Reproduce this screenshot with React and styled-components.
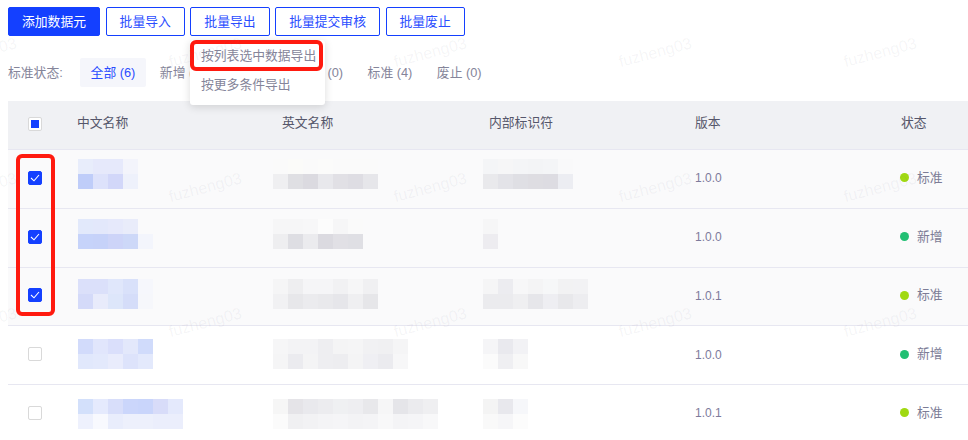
import React from 'react'
import styled, { createGlobalStyle } from 'styled-components'

const GlobalStyle = createGlobalStyle`
  html, body {
    margin: 0;
    height: 440px;
    overflow: hidden;
    background: #fff;
    font-family: "Liberation Sans", "Noto Sans CJK SC", sans-serif;
    font-size: 12.8px;
    color: #7c7c90;
  }
`

const Page = styled.div`
  position: relative;
  width: 968px;
  height: 440px;
  overflow: hidden;
  padding: 7px 0 0 8px;
  box-sizing: border-box;
`

const Toolbar = styled.div`
  display: flex;
  gap: 5.6px;
`

const Button = styled.div`
  box-sizing: border-box;
  height: 29px;
  padding: 0 13px 2px;
  display: flex;
  align-items: center;
  border: 1px solid #1440ff;
  border-radius: 2px;
  color: ${p => (p.$primary ? '#fff' : '#2a4dff')};
  background: ${p => (p.$primary ? '#1440ff' : '#fff')};
`

const FilterBar = styled.div`
  display: flex;
  align-items: center;
  margin-top: 22px;
  height: 29px;
`

const FilterLabel = styled.span`
  width: 72px;
  padding-bottom: 3px;
  color: #85859a;
`

const FilterItem = styled.div`
  width: 66px;
  height: 29px;
  margin-right: 3.25px;
  padding-bottom: 3px;
  box-sizing: border-box;
  border-radius: 2px;
  display: flex;
  align-items: center;
  justify-content: center;
  color: ${p => (p.$active ? '#2a4dff' : '#85859a')};
  background: ${p => (p.$active ? '#f5f6fb' : 'transparent')};
`

const Table = styled.div`
  margin-top: 14px;
`

const columns = '69px 205px 207px 206px 206px 67px'

const HeaderRow = styled.div`
  display: grid;
  grid-template-columns: ${columns};
  align-items: center;
  height: 48px;
  box-sizing: border-box;
  padding-bottom: 3px;
  background: #f0f1f4;
  color: #55566a;
`

const HeaderLabel = styled.span`
  margin-bottom: 5px;
`

const Row = styled.div`
  display: grid;
  grid-template-columns: ${columns};
  height: 58.75px;
  box-sizing: border-box;
  align-items: center;
  padding-bottom: 2px;
  border-top: 1px solid #e7e7f1;
  background: ${p => (p.$checked ? '#fafafb' : '#fff')};
`

const CheckCell = styled.div`
  padding-left: 20px;
  display: flex;
`

const Box = styled.span`
  box-sizing: border-box;
  width: 14px;
  height: 14px;
  border-radius: 2px;
  display: flex;
  align-items: center;
  justify-content: center;
  border: 1px solid ${p => (p.$on ? '#1440ff' : '#d9d9d9')};
  background: ${p => (p.$on ? '#1440ff' : '#fff')};
`

const Partial = styled.span`
  width: 8px;
  height: 8px;
  background: #1440ff;
`

const MosaicCell = styled.div`
  align-self: start;
  height: 0;
`

const MosaicGrid = styled.div`
  display: grid;
  grid-auto-rows: 15px;
  grid-template-columns: repeat(${p => p.$cols}, 15px);
  width: max-content;
  margin-top: ${p => p.$top}px;
  margin-left: ${p => p.$left}px;
`

const Version = styled.span`
  font-size: 12px;
  color: #7d7b9c;
  margin-top: 1px;
`

const Status = styled.div`
  display: flex;
  align-items: center;
  gap: 8px;
  margin-left: -1px;
  color: #7c7c96;
`

const StatusText = styled.span`
  margin-bottom: 3px;
`

const Dot = styled.span`
  width: 9px;
  height: 9px;
  border-radius: 50%;
  background: ${p => (p.$kind === '标准' ? '#a0d911' : '#22bf73')};
`

const Menu = styled.div`
  position: absolute;
  left: 190px;
  top: 40px;
  width: 135px;
  height: 65px;
  padding-top: 1px;
  box-sizing: border-box;
  background: #fff;
  border-radius: 3px;
  box-shadow: 0 2px 8px rgba(0, 0, 0, 0.14);
`

const MenuItem = styled.div`
  height: 29px;
  line-height: 29px;
  padding-left: 11px;
  color: #85859a;
`

const Callout = styled.div`
  position: absolute;
  box-sizing: border-box;
  border: 4px solid #ff1a0f;
  border-radius: 6px;
  left: ${p => p.$x}px;
  top: ${p => p.$y}px;
  width: ${p => p.$w}px;
  height: ${p => p.$h}px;
`

const Watermarks = styled.div`
  position: absolute;
  inset: 0;
  pointer-events: none;
  display: grid;
  grid-template-columns: repeat(5, 225px);
  grid-auto-rows: 135px;
  padding-top: 53px;
  margin-left: -53px;
`

const Mark = styled.span`
  font-size: 16px;
  height: 20px;
  transform: rotate(-15deg);
  transform-origin: 0 100%;
  color: rgba(120, 120, 140, 0.07);
`

const rows = [
  {
    version: '1.0.0',
    status: '标准',
    checked: true,
    top: 9,
    name: [
      ['#e8edfb', '#e6e9fb', '#e6e9fb', '#f3f4fb'],
      ['#bfcdf9', '#dde2fb', '#d2d7f9', '#eef1fb'],
    ],
    en: [
      ['#fafafa', '#fbfbf9', '#fafafa', '#fbfbfa', '#fafafa', '#fafafa', '#fafafa'],
      ['#efeff1', '#dfdfe3', '#dbdae0', '#e8e8ec', '#e1e0e5', '#dedde3', '#e6e6ea'],
    ],
    id: [
      ['#f4f5f7', '#f6f6f7', '#f4f5f7', '#f3f4f6', '#f4f5f7', '#f9f9fa'],
      ['#e9e9ec', '#e3e3e8', '#dfdfe4', '#dedde2', '#dddce2', '#ecedf2'],
    ],
  },
  {
    version: '1.0.0',
    status: '新增',
    checked: true,
    top: 10,
    name: [
      ['#e2e9fb', '#e3e8fb', '#e6e9fb', '#e9ecfa', '#fafafb'],
      ['#c6d3fa', '#c6d2f9', '#cdd4f8', '#cdd8f8', '#f3f5fc'],
    ],
    en: [
      ['#f6f6f7', '#f6f6f7', '#f7f7f8', '#fcfcfc', '#f6f6f7', '#fafafa'],
      ['#eeeef0', '#dedee3', '#ebebee', '#dbdae0', '#e1e0e5', '#dfdfe4'],
    ],
    id: [['#f6f6f7'], ['#edecf0']],
  },
  {
    version: '1.0.1',
    status: '标准',
    checked: true,
    top: 11,
    name: [
      ['#dbe0fa', '#dbe0fa', '#e0e7fb', '#d9e1fa', '#f6f7fc'],
      ['#d4daf9', '#e8ebfb', '#dde6fa', '#d5ddf9', '#f6f7fb'],
    ],
    en: [
      ['#f5f5f6', '#eeeef0', '#f5f5f7', '#f5f5f7', '#f1f1f3', '#f6f6f7', '#f0f0f2'],
      ['#f1f1f3', '#e7e7ea', '#ebebee', '#e9e9ec', '#e6e6ea', '#efeff1', '#e6e6e9'],
    ],
    id: [
      ['#f5f5f6', '#ececf0', '#f7f7f8', '#f4f4f5', '#f6f7f8', '#f2f2f3', '#f2f2f4'],
      ['#ebebee', '#ebebee', '#efeff1', '#e6e6ea', '#eeeef2', '#e8e8eb', '#ededf0'],
    ],
  },
  {
    version: '1.0.0',
    status: '新增',
    top: 13,
    name: [
      ['#d2dbfb', '#e1e6fc', '#dadffb', '#e3e8fb', '#d0dbfb'],
      ['#e1e8fc', '#e3e9fc', '#e9ecfc', '#dde3fb', '#e3e9fc'],
    ],
    en: [
      ['#f6f6f7', '#f3f3f5', '#f3f3f5', '#eeeef1', '#f4f4f5', '#f5f5f6', '#f1f1f3', '#f0f0f2', '#f5f5f6'],
      ['#f5f5f6', '#ebebef', '#f4f4f5', '#eeeef1', '#ededf0', '#f4f4f5', '#efeff3', '#ebebef', '#f7f7f8'],
    ],
    id: [
      ['#f5f5f7', '#e9e9ee', '#f2f2f5'],
      ['#fbfbfb', '#efeff2', '#f8f8f8'],
    ],
  },
  {
    version: '1.0.1',
    status: '标准',
    top: 14,
    name: [
      ['#d3e0fb', '#e5eafd', '#d8defa', '#cbd6fb', '#c9d5fb', '#d8dcf9', '#e4e9fc'],
      ['#eef1fd', '#f8f9fe', '#e9edfc', '#edf0fc', '#edf0fc', '#ebeefc', '#ebeefc'],
    ],
    en: [
      ['#f6f6f6', '#e5e4e8', '#e9e9ed', '#ececef', '#eff0f2', '#eeeef1', '#e8e8eb', '#f6f6f7', '#e5e5e9', '#ebebee', '#efeff1'],
      ['#fbfbfb', '#f0f0f2', '#f2f2f4', '#f4f4f6', '#f5f5f7', '#f3f3f5', '#f4f4f6', '#f8f8f9', '#f4f4f6', '#f5f5f7', '#f8f8f9'],
    ],
    id: [
      ['#f4f4f4', '#e8e8ed', '#f6f7fa'],
      ['#f9f9f9', '#f6f6f8', '#fcfcfc'],
    ],
  },
]

function Mosaic({ data, top, left }) {
  return (
    <MosaicCell>
      <MosaicGrid $cols={data[0].length} $top={top} $left={left}>
        {data.flat().map((c, i) => (
          <div key={i} style={{ background: c }} />
        ))}
      </MosaicGrid>
    </MosaicCell>
  )
}

function Tick() {
  return (
    <svg width="10" height="8" viewBox="0 0 10 8" fill="none">
      <path d="M1 4l3 2.8L9 1" stroke="#fff" strokeWidth="1.1" />
    </svg>
  )
}

export default function App() {
  return (
    <Page>
      <GlobalStyle />
      <Toolbar>
        <Button $primary>添加数据元</Button>
        <Button>批量导入</Button>
        <Button>批量导出</Button>
        <Button>批量提交审核</Button>
        <Button>批量废止</Button>
      </Toolbar>

      <FilterBar>
        <FilterLabel>标准状态:</FilterLabel>
        <FilterItem $active>全部 (6)</FilterItem>
        <FilterItem>新增 (2)</FilterItem>
        <FilterItem>审核 (0)</FilterItem>
        <FilterItem>修订 (0)</FilterItem>
        <FilterItem>标准 (4)</FilterItem>
        <FilterItem>废止 (0)</FilterItem>
      </FilterBar>

      <Table>
        <HeaderRow>
          <CheckCell>
            <Box>
              <Partial />
            </Box>
          </CheckCell>
          <HeaderLabel>中文名称</HeaderLabel>
          <HeaderLabel>英文名称</HeaderLabel>
          <HeaderLabel>内部标识符</HeaderLabel>
          <HeaderLabel>版本</HeaderLabel>
          <HeaderLabel>状态</HeaderLabel>
        </HeaderRow>
        {rows.map((r, i) => (
          <Row key={i} $checked={r.checked}>
            <CheckCell>
              <Box $on={r.checked}>{r.checked && <Tick />}</Box>
            </CheckCell>
            <Mosaic data={r.name} top={r.top} left={1} />
            <Mosaic data={r.en} top={r.top} left={-9} />
            <Mosaic data={r.id} top={r.top} left={-6} />
            <Version>{r.version}</Version>
            <Status>
              <Dot $kind={r.status} />
              <StatusText>{r.status}</StatusText>
            </Status>
          </Row>
        ))}
      </Table>

      <Menu>
        <MenuItem>按列表选中数据导出</MenuItem>
        <MenuItem>按更多条件导出</MenuItem>
      </Menu>
      <Callout $x={190} $y={40} $w={133} $h={31} />
      <Callout $x={16} $y={154} $w={39} $h={162} />

      <Watermarks>
        {Array.from({ length: 15 }).map((_, i) => (
          <Mark key={i}>fuzheng03</Mark>
        ))}
      </Watermarks>
    </Page>
  )
}
